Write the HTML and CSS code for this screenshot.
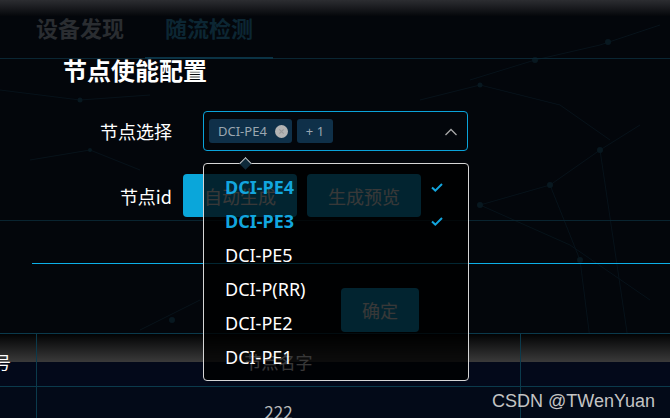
FILE: index.html
```html
<!DOCTYPE html>
<html lang="zh">
<head>
<meta charset="utf-8">
<link rel="stylesheet" href="styles.css">
</head>
<body>
<svg class="bg-net" width="670" height="418" viewBox="0 0 670 418">
  <g stroke="#07121a" stroke-width="1" fill="none">
    <path d="M470 80 L535 60 L600 45 L660 25"/>
    <path d="M480 205 L550 185 L600 150 L640 125"/>
    <path d="M480 205 L570 245 L650 300"/>
    <path d="M550 185 L580 260 L600 418"/>
    <path d="M600 150 L640 420"/>
    <path d="M0 90 L80 100 L150 95"/>
    <path d="M30 160 L90 150 L140 170"/>
    <path d="M420 100 L480 85 L560 105 L610 140"/>
    <path d="M140 330 L200 300"/>
    <path d="M30 370 L120 410 L200 395"/>
    <path d="M380 390 L470 410 L520 370"/>
  </g>
  <g fill="#081820">
    <circle cx="535" cy="60" r="3"/>
    <circle cx="480" cy="85" r="2.5"/>
    <circle cx="550" cy="185" r="3"/>
    <circle cx="480" cy="205" r="3"/>
    <circle cx="600" cy="150" r="3"/>
    <circle cx="580" cy="260" r="3"/>
    <circle cx="80" cy="100" r="2.5"/>
    <circle cx="90" cy="150" r="2"/>
    <circle cx="172" cy="320" r="3"/>
    <circle cx="172" cy="410" r="3"/>
    <circle cx="20" cy="372" r="2.5"/>
    <circle cx="608" cy="42" r="3"/>
  </g>
</svg>

<div class="page">
  <div class="topbar"></div>
  <div class="tabs">
    <div class="tab">设备发现</div>
    <div class="tab active">随流检测</div>
  </div>

  <div class="dialog">
    <h2 class="title">节点使能配置</h2>

    <div class="row row-select">
      <label class="label">节点选择</label>
      <div class="select">
        <span class="tag">DCI-PE4
          <svg class="tag-close" width="13" height="13" viewBox="0 0 13 13"><circle cx="6.5" cy="6.5" r="6.5" fill="#b4b4b4"/><path d="M4.3 4.3 L8.7 8.7 M8.7 4.3 L4.3 8.7" stroke="#9a9a9a" stroke-width="1.2"/></svg>
        </span>
        <span class="tag tag-count">+ 1</span>
        <svg class="chevron" width="12" height="8" viewBox="0 0 12 8"><polyline points="0.5,7 6,1.5 11.5,7" fill="none" stroke="#a8a8a8" stroke-width="1.3"/></svg>
      </div>
    </div>

    <div class="row row-id">
      <label class="label">节点id</label>
      <div class="btns">
        <button class="btn">自动生成</button>
        <button class="btn">生成预览</button>
      </div>
    </div>

    <div class="divider-dark"></div>
    <div class="divider-cyan"></div>

    <div class="footer">
      <button class="btn btn-ok">确定</button>
    </div>
  </div>

  <div class="table">
    <div class="trow thead">
      <div class="cell c1"><span>序号</span></div>
      <div class="cell c2">节点名字</div>
      <div class="cell c3"></div>
    </div>
    <div class="trow tbody">
      <div class="cell c1"></div>
      <div class="cell c2">222</div>
      <div class="cell c3"></div>
    </div>
  </div>
</div>

<div class="dropdown">
  <span class="arrow"></span>
  <ul class="options">
    <li class="opt selected">DCI-PE4<svg class="check" width="12" height="9" viewBox="0 0 12 9"><polyline points="1,4.5 4.3,7.6 11,1" fill="none" stroke="#12a6df" stroke-width="2"/></svg></li>
    <li class="opt selected">DCI-PE3<svg class="check" width="12" height="9" viewBox="0 0 12 9"><polyline points="1,4.5 4.3,7.6 11,1" fill="none" stroke="#12a6df" stroke-width="2"/></svg></li>
    <li class="opt">DCI-PE5</li>
    <li class="opt">DCI-P(RR)</li>
    <li class="opt">DCI-PE2</li>
    <li class="opt">DCI-PE1</li>
  </ul>
</div>

<div class="watermark">CSDN @TWenYuan</div>
</body>
</html>
```

FILE: styles.css
```css
* { box-sizing: border-box; }
html, body { margin: 0; padding: 0; }
body {
  width: 670px;
  height: 418px;
  overflow: hidden;
  position: relative;
  background: #03060b;
  font-family: "Noto Sans", "Noto Sans CJK SC", sans-serif;
  color: #fff;
}
.bg-net { position: absolute; left: 0; top: 0; z-index: 0; }
.page { position: relative; z-index: 1; }

.topbar {
  height: 16px;
  background: linear-gradient(to bottom, #2c2d31, #05070b);
}
.tabs {
  display: flex;
  height: 43px;
  border-bottom: 1px solid #0a2633;
  padding-left: 16px;
  gap: 1px;
}
.tab {
  font-family: "Noto Sans CJK SC", sans-serif;
  font-size: 22px;
  font-weight: 700;
  line-height: 22px;
  padding: 0 20px;
  height: 43px;
  color: #2a2d31;
}
.tab.active {
  color: #0c2633;
  border-bottom: 2px solid #0b3345;
}

.dialog { padding: 0; }
.title {
  margin: -2px 0 0 63px;
  font-family: "Noto Sans CJK SC", sans-serif;
  font-size: 24px;
  font-weight: 700;
  line-height: 26px;
  height: 26px;
  color: #fff;
}
.row { display: flex; align-items: center; }
.label {
  width: 172px;
  text-align: right;
  font-family: "Noto Sans CJK SC", sans-serif;
  font-size: 18px;
  color: #fff;
}
.row-select { margin-top: 28px; }
.select {
  margin-left: 31px;
  width: 265px;
  height: 40px;
  border: 1px solid #0aa3da;
  border-radius: 4px;
  display: flex;
  align-items: center;
  padding-left: 5px;
  gap: 5px;
  position: relative;
}
.tag {
  height: 24px;
  border-radius: 3px;
  background: #0f3049;
  color: #9ba7b1;
  font-size: 13px;
  display: flex;
  align-items: center;
  padding: 0 4px 0 9px;
  gap: 8px;
}
.tag-count { padding: 0 9px; }
.chevron { position: absolute; right: 10px; top: 16px; }

.row-id { margin-top: 23px; }
.row-id .label { margin-right: 11px; }
.btns { display: flex; gap: 10px; }
.btn {
  width: 114px;
  height: 43px;
  border: none;
  border-radius: 4px;
  background: #0aa6da;
  color: #fff;
  font-family: "Noto Sans CJK SC", sans-serif;
  font-size: 18px;
  padding: 0;
}
.divider-dark {
  margin-top: 3px;
  height: 1px;
  background: #092430;
}
.divider-cyan {
  margin-top: 42px;
  margin-left: 32px;
  height: 1px;
  background: #0cb0e8;
}
.footer { padding-left: 341px; margin-top: 24px; height: 45px; }
.btn-ok { width: 78px; height: 44px; }

.table { border-top: 1px solid #0b3a4c; }
.trow { display: flex; }
.thead {
  height: 53px;
  border-bottom: 1px solid #0b3a4c;
  background: linear-gradient(to bottom, #020304 0, #3a3a3a 28px, #03091a 28px, #03091a 100%);
}
.tbody { height: 31px; background: #030a18; }
.cell {
  font-family: "Noto Sans CJK SC", sans-serif;
  font-size: 17px;
  color: #fff;
  display: flex;
  align-items: center;
  justify-content: center;
}
.thead .cell { padding-top: 2px; }
.c1 {
  width: 37px;
  border-right: 1px solid #0b3a4c;
  justify-content: flex-end;
  overflow: hidden;
  white-space: nowrap;
  padding-right: 25px;
}
.c1 span { flex-shrink: 0; }
.c2 { width: 484px; border-right: 1px solid #0b3a4c; }
.c3 { flex: 1; }
.tbody .cell { color: #b8b8b8; padding-top: 18px; }

.dropdown {
  position: absolute;
  left: 203px;
  top: 163px;
  width: 266px;
  height: 218px;
  border: 1px solid #d6d6d6;
  border-radius: 4px;
  background: rgba(0, 0, 0, 0.78);
  z-index: 5;
}
.arrow {
  position: absolute;
  left: 37px;
  top: -5px;
  width: 9px;
  height: 9px;
  transform: rotate(45deg);
  background: #0e2a3a;
  border-top: 1px solid #c8c8c8;
  border-left: 1px solid #c8c8c8;
}
.options { list-style: none; margin: 0; padding: 6px 0; }
.opt {
  height: 34px;
  display: flex;
  align-items: center;
  justify-content: space-between;
  padding: 0 25px 0 21px;
  font-size: 18px;
  color: #fff;
}
.opt.selected { color: #12a6df; font-weight: 700; }

.watermark {
  position: absolute;
  right: 15px;
  bottom: 6px;
  font-family: "Liberation Sans", Arial, sans-serif;
  font-size: 18px;
  color: #c4c4c4;
  z-index: 6;
}
```
